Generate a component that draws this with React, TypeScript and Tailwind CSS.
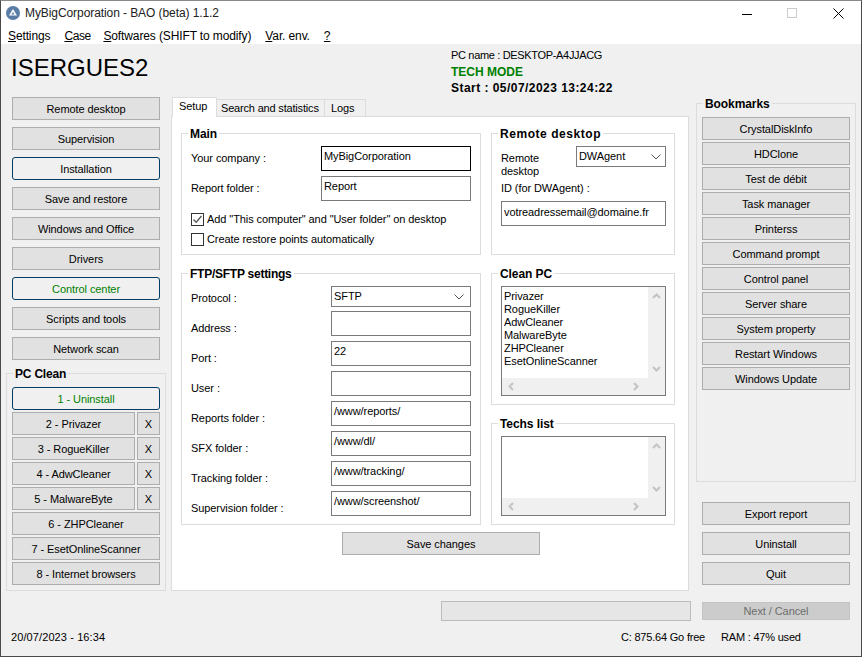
import React from "react";

function Btn({ children, className = "" }: { children: React.ReactNode; className?: string }) {
  return (
    <div className={"h-[23px] pt-[1px] flex items-center justify-center bg-[#e1e1e1] border border-[#adadad] text-black shrink-0 " + className}>
      {children}
    </div>
  );
}

function FocusBtn({ children, className = "" }: { children: React.ReactNode; className?: string }) {
  return (
    <div className={"h-[23px] pt-[1px] flex items-center justify-center bg-[#f0f0f0] border border-[#003c64] rounded-[3px] shrink-0 " + className}>
      {children}
    </div>
  );
}

function Group({ title, className = "", titleClass = "", children, bg = "bg-white" }: { title: string; className?: string; titleClass?: string; children?: React.ReactNode; bg?: string }) {
  return (
    <div className={"relative border border-[#dcdcdc] shrink-0 " + className}>
      <div className={"absolute -top-[7px] left-[6px] px-[2px] font-bold text-[12px] leading-[14px] text-black " + bg + " " + titleClass}>{title}</div>
      {children}
    </div>
  );
}

function Field({ label, value, dark = false, wide = false }: { label: string; value?: string; dark?: boolean; wide?: boolean }) {
  return (
    <div className="flex h-[25px] pl-[9px]">
      <div className={"leading-[14px] " + (wide ? "w-[130px] pt-[5px]" : "w-[140px] pt-[10px]")}>{label}</div>
      <div className={"h-[25px] bg-white border px-[2px] pt-[1px] leading-[16px] " + (wide ? "w-[150px] " : "w-[140px] ") + (dark ? "border-black" : "border-[#7a7a7a]")}>{value}</div>
    </div>
  );
}

function Chevron() {
  return (
    <svg width="12" height="8" viewBox="0 0 12 8" className="shrink-0">
      <path d="M1.5 1.5 L6 6 L10.5 1.5" fill="none" stroke="#555" strokeWidth="1" />
    </svg>
  );
}

function Arrow({ d }: { d: string }) {
  return (
    <svg width="9" height="9" viewBox="0 0 9 9">
      <path d={d} fill="none" stroke="#c4c4c4" strokeWidth="2" />
    </svg>
  );
}

function ListBox({ items, className = "" }: { items: string[]; className?: string }) {
  return (
    <div className={"border border-[#7a7a7a] bg-white flex flex-col " + className}>
      <div className="flex-1 flex min-h-0">
        <div className="flex-1 pl-[2px] pt-[3px] leading-[13px]">
          {items.map((t) => (
            <div key={t}>{t}</div>
          ))}
        </div>
        <div className="w-[17px] bg-[#f0f0f0] flex flex-col items-center justify-between py-[5px]">
          <Arrow d="M1 6 L4.5 2.5 L8 6" />
          <Arrow d="M1 3 L4.5 6.5 L8 3" />
        </div>
      </div>
      <div className="h-[17px] bg-[#f0f0f0] flex items-center justify-between pl-[5px] pr-[25px]">
        <Arrow d="M6 1 L2.5 4.5 L6 8" />
        <Arrow d="M3 1 L6.5 4.5 L3 8" />
      </div>
    </div>
  );
}

function Check({ checked = false }: { checked?: boolean }) {
  return (
    <div className="w-[13px] h-[13px] border border-[#333] bg-white shrink-0 flex items-center justify-center">
      {checked && (
        <svg width="11" height="11" viewBox="0 0 11 11">
          <path d="M1.5 5.5 L4.2 8.2 L9.5 2" fill="none" stroke="#555" strokeWidth="1.3" />
        </svg>
      )}
    </div>
  );
}

export default function App() {
  const left = ["Remote desktop", "Supervision", "Installation", "Save and restore", "Windows and Office", "Drivers", "Control center", "Scripts and tools", "Network scan"];
  const marks = ["CrystalDiskInfo", "HDClone", "Test de débit", "Task manager", "Printerss", "Command prompt", "Control panel", "Server share", "System property", "Restart Windows", "Windows Update"];
  return (
    <div className="relative w-[862px] h-[657px] overflow-hidden flex flex-col bg-[#f0f0f0] border border-[#4a4a4a] border-t-[#8a8a8a] text-[11px] tracking-[-0.08px] text-black font-['Liberation_Sans',sans-serif]">
      {/* title bar */}
      <div className="h-[24px] bg-white flex items-center shrink-0 relative">
        <svg width="14" height="14" viewBox="0 0 14 14" className="ml-[5px]">
          <circle cx="7" cy="7" r="7" fill="#5a7da8" />
          <path d="M7 3 L11 9.5 L3 9.5 Z" fill="#fff" />
          <path d="M7 6 L8.6 8.6 L5.4 8.6 Z" fill="#5a7da8" />
        </svg>
        <div className="ml-[5px] text-[12px] tracking-[-0.08px] text-[#222]">MyBigCorporation - BAO (beta) 1.1.2</div>
        <div className="ml-auto flex items-center">
          <svg width="11" height="11" viewBox="0 0 11 11" className="mr-[34px]">
            <path d="M0 6.5 H10" stroke="#000" strokeWidth="1" />
          </svg>
          <svg width="11" height="11" viewBox="0 0 11 11" className="mr-[35px]">
            <rect x="0.5" y="0.5" width="9" height="9" fill="none" stroke="#ccc" />
          </svg>
          <svg width="11" height="11" viewBox="0 0 11 11" className="mr-[17px]">
            <path d="M0.5 0.5 L10.5 10.5 M10.5 0.5 L0.5 10.5" stroke="#000" strokeWidth="1" />
          </svg>
        </div>
      </div>
      {/* menu */}
      <div className="h-[19px] bg-white flex items-center shrink-0 pl-[7px] pt-[2px] gap-[14px] text-[12px] tracking-[-0.12px] leading-[14px]">
        <span><u>S</u>ettings</span>
        <span className="w-[25px] tracking-[-0.4px]"><u>C</u>ase</span>
        <span><u>S</u>oftwares (SHIFT to modify)</span>
        <span><u>V</u>ar. env.</span>
        <span><u>?</u></span>
      </div>
      {/* header */}
      <div className="h-[53px] flex shrink-0">
        <div className="w-[450px] pl-[10px] pt-[10px] text-[24px] tracking-normal leading-[27px] text-black">ISERGUES2</div>
        <div className="pt-[3px] leading-[16px]">
          <div className="h-[17px] tracking-[-0.33px]">PC name : DESKTOP-A4JJACG</div>
          <div className="h-[16px] text-[12px] font-bold text-[#008000] tracking-normal">TECH MODE</div>
          <div className="h-[16px] text-[12px] font-bold tracking-[0.46px]">Start : 05/07/2023 13:24:22</div>
        </div>
      </div>
      {/* body */}
      <div className="flex-1 min-h-0 flex pl-[5px]">
        {/* left column */}
        <div className="w-[160px] shrink-0">
          <div className="px-[6px] flex flex-col gap-[7px]">
            {left.map((t) =>
              t === "Installation" ? (
                <FocusBtn key={t}>{t}</FocusBtn>
              ) : t === "Control center" ? (
                <FocusBtn key={t} className="text-[#008000]">{t}</FocusBtn>
              ) : (
                <Btn key={t}>{t}</Btn>
              )
            )}
          </div>
          <Group title="PC Clean" titleClass="tracking-[-0.2px]" bg="bg-[#f0f0f0]" className="mt-[13px] h-[218px] px-[5px] pt-[13px] flex flex-col gap-[2px]">
            <FocusBtn className="text-[#008000]">1 - Uninstall</FocusBtn>
            {["2 - Privazer", "3 - RogueKiller", "4 - AdwCleaner", "5 - MalwareByte"].map((t) => (
              <div key={t} className="flex gap-[2px]">
                <Btn className="w-[123px]">{t}</Btn>
                <Btn className="w-[23px]">X</Btn>
              </div>
            ))}
            <Btn>6 - ZHPCleaner</Btn>
            <Btn>7 - EsetOnlineScanner</Btn>
            <Btn>8 - Internet browsers</Btn>
          </Group>
        </div>
        {/* middle */}
        <div className="w-[520px] ml-[5px] shrink-0">
          <div className="h-[20px] flex items-end pl-[1px] relative z-10">
            <div className="h-[20px] w-[45px] bg-white border border-b-0 border-[#dcdcdc] pl-[6px] leading-[16px]">Setup</div>
            <div className="h-[18px] w-[108px] bg-[#f0f0f0] border border-l-0 border-[#dcdcdc] pl-[4px] leading-[16px] tracking-[-0.18px] whitespace-nowrap">Search and statistics</div>
            <div className="h-[18px] w-[41px] bg-[#f0f0f0] border border-l-0 border-[#dcdcdc] pl-[6px] leading-[16px]">Logs</div>
          </div>
          <div className="w-[518px] h-[475px] -mt-[1px] bg-white border border-[#dcdcdc] pl-[9px] pt-[16px]">
            <div className="flex gap-[10px]">
              <div className="w-[300px] flex flex-col gap-[18px]">
                <Group title="Main" className="h-[122px] pt-[12px]">
                  <Field wide label="Your company :" value="MyBigCorporation" dark />
                  <div className="h-[5px]" />
                  <Field wide label="Report folder :" value="Report" />
                  <div className="pl-[9px] pt-[12px] flex items-center gap-[3px] h-[25px]">
                    <Check checked />
                    <span>Add "This computer" and "User folder" on desktop</span>
                  </div>
                  <div className="pl-[9px] pt-[6px] flex items-center gap-[3px] h-[20px]">
                    <Check />
                    <span>Create restore points automatically</span>
                  </div>
                </Group>
                <Group title="FTP/SFTP settings" titleClass="tracking-[-0.25px]" className="h-[252px] pt-[12px]">
                  <div className="flex h-[25px] pl-[9px]">
                    <div className="w-[140px] pt-[5px] leading-[14px]">Protocol :</div>
                    <div className="w-[140px] h-[21px] bg-white border border-[#7a7a7a] pl-[2px] flex items-center justify-between pr-[5px]">
                      <span>SFTP</span>
                      <Chevron />
                    </div>
                  </div>
                  <div className="flex flex-col gap-[5px]">
                    <Field label="Address :" />
                    <Field label="Port :" value="22" />
                    <Field label="User :" />
                    <Field label="Reports folder :" value="/www/reports/" />
                    <Field label="SFX folder :" value="/www/dl/" />
                    <Field label="Tracking folder :" value="/www/tracking/" />
                    <Field label="Supervision folder :" value="/www/screenshot/" />
                  </div>
                </Group>
              </div>
              <div className="w-[184px] flex flex-col gap-[18px]">
                <Group title="Remote desktop" titleClass="tracking-[0.55px]" className="h-[122px] pt-[12px] pl-[9px]">
                  <div className="flex h-[36px]">
                    <div className="w-[75px] pt-[6px] leading-[13px]">Remote desktop</div>
                    <div className="w-[90px] h-[21px] bg-white border border-[#7a7a7a] pl-[2px] pr-[3px] flex items-center justify-between">
                      <span>DWAgent</span>
                      <Chevron />
                    </div>
                  </div>
                  <div className="h-[13px] leading-[13px]">ID (for DWAgent) :</div>
                  <div className="mt-[6px] w-[165px] h-[25px] bg-white border border-[#7a7a7a] px-[2px] pt-[2px] leading-[16px] whitespace-nowrap overflow-hidden">votreadressemail@domaine.fr</div>
                </Group>
                <Group title="Clean PC" className="h-[132px] pt-[12px] pl-[9px]">
                  <ListBox className="w-[165px] h-[110px]" items={["Privazer", "RogueKiller", "AdwCleaner", "MalwareByte", "ZHPCleaner", "EsetOnlineScanner"]} />
                </Group>
                <Group title="Techs list" className="h-[102px] pt-[12px] pl-[9px]">
                  <ListBox className="w-[165px] h-[80px]" items={[]} />
                </Group>
              </div>
            </div>
            <Btn className="w-[198px] ml-[161px] mt-[7px]">Save changes</Btn>
          </div>
        </div>
        {/* right */}
        <div className="w-[160px] ml-[5px] shrink-0 pt-[6px]">
          <Group title="Bookmarks" bg="bg-[#f0f0f0]" className="h-[379px] px-[5px] pt-[13px] flex flex-col gap-[2px]">
            {marks.map((t) => (
              <Btn key={t}>{t}</Btn>
            ))}
          </Group>
          <div className="mt-[20px] px-[6px] flex flex-col gap-[7px]">
            <Btn>Export report</Btn>
            <Btn>Uninstall</Btn>
            <Btn>Quit</Btn>
          </div>
        </div>
      </div>
      {/* footer */}
      <div className="h-[20px] flex shrink-0 relative">
        <div className="ml-[440px] w-[250px] h-[20px] bg-[#e6e6e6] border border-[#bcbcbc]" />
        <div className="ml-[11px] w-[148px] h-[18px] mt-[1px] bg-[#cccccc] text-[#6d6d6d] border border-[#c4c4c4] flex items-center justify-center">Next / Cancel</div>
      </div>
      <div className="h-[35px] shrink-0 flex pt-[9px] leading-[14px]">
        <div className="ml-[10px] w-[610px] tracking-[0.1px]">20/07/2023 - 16:34</div>
        <div className="w-[100px] tracking-[-0.2px]">C: 875.64 Go free</div>
        <div className="tracking-[-0.2px]">RAM : 47% used</div>
      </div>
    </div>
  );
}
